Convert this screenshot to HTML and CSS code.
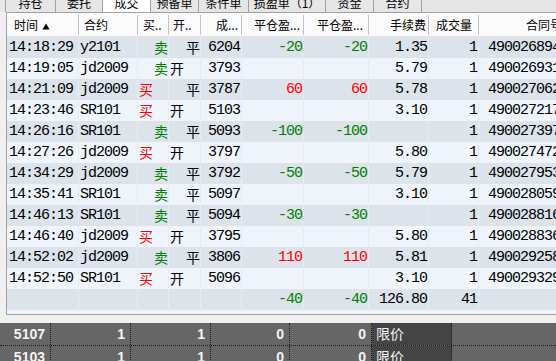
FILE: index.html
```html
<!DOCTYPE html>
<html>
<head>
<meta charset="utf-8">
<link rel="stylesheet" href="styles.css">
</head>
<body>
<div class="tabs">
  <div class="tab w1 first"><span>持仓</span></div>
  <div class="tab w2"><span>委托</span></div>
  <div class="tab w3 on"><span>成交</span></div>
  <div class="tab w4"><span>预备单</span></div>
  <div class="tab w5"><span>条件单</span></div>
  <div class="tab w6"><span>损盈单（1）</span></div>
  <div class="tab w7"><span>资金</span></div>
  <div class="tab w8"><span>合约</span></div>
</div>
<div class="panel">
  <div class="row hd">
    <div class="c h-tm">时间 <svg class="sort" width="8" height="7" viewBox="0 0 8 7"><path d="M4 0.5 L7.6 6.5 L0.4 6.5 Z" fill="#000"/></svg></div>
    <div class="c h-l5">合约</div>
    <div class="c h-l5">买..</div>
    <div class="c h-l4">开..</div>
    <div class="c h-r">成...</div>
    <div class="c h-r">平仓盈...</div>
    <div class="c h-r h-r5">平仓盈...</div>
    <div class="c h-r h-r2">手续费</div>
    <div class="c h-r h-r6">成交量</div>
    <div class="c h-r h-r20">合同号</div>
  </div>

  <div class="row odd">
    <div class="c tm">14:18:29</div><div class="c ct">y2101</div>
    <div class="c cj r g">卖</div><div class="c cj r">平</div>
    <div class="c n">6204</div><div class="c n g">-20</div><div class="c n g">-20</div>
    <div class="c n">1.35</div><div class="c n">1</div><div class="c no">490026894</div>
  </div>
  <div class="row even">
    <div class="c tm">14:19:05</div><div class="c ct">jd2009</div>
    <div class="c cj r g">卖</div><div class="c cj l">开</div>
    <div class="c n">3793</div><div class="c n"></div><div class="c n"></div>
    <div class="c n">5.79</div><div class="c n">1</div><div class="c no">490026931</div>
  </div>
  <div class="row odd">
    <div class="c tm">14:21:09</div><div class="c ct">jd2009</div>
    <div class="c cj l rd">买</div><div class="c cj r">平</div>
    <div class="c n">3787</div><div class="c n rd">60</div><div class="c n rd">60</div>
    <div class="c n">5.78</div><div class="c n">1</div><div class="c no">490027062</div>
  </div>
  <div class="row even">
    <div class="c tm">14:23:46</div><div class="c ct">SR101</div>
    <div class="c cj l rd">买</div><div class="c cj l">开</div>
    <div class="c n">5103</div><div class="c n"></div><div class="c n"></div>
    <div class="c n">3.10</div><div class="c n">1</div><div class="c no">490027217</div>
  </div>
  <div class="row odd">
    <div class="c tm">14:26:16</div><div class="c ct">SR101</div>
    <div class="c cj r g">卖</div><div class="c cj r">平</div>
    <div class="c n">5093</div><div class="c n g">-100</div><div class="c n g">-100</div>
    <div class="c n"></div><div class="c n">1</div><div class="c no">490027397</div>
  </div>
  <div class="row even">
    <div class="c tm">14:27:26</div><div class="c ct">jd2009</div>
    <div class="c cj l rd">买</div><div class="c cj l">开</div>
    <div class="c n">3797</div><div class="c n"></div><div class="c n"></div>
    <div class="c n">5.80</div><div class="c n">1</div><div class="c no">490027472</div>
  </div>
  <div class="row odd">
    <div class="c tm">14:34:29</div><div class="c ct">jd2009</div>
    <div class="c cj r g">卖</div><div class="c cj r">平</div>
    <div class="c n">3792</div><div class="c n g">-50</div><div class="c n g">-50</div>
    <div class="c n">5.79</div><div class="c n">1</div><div class="c no">490027953</div>
  </div>
  <div class="row even">
    <div class="c tm">14:35:41</div><div class="c ct">SR101</div>
    <div class="c cj r g">卖</div><div class="c cj r">平</div>
    <div class="c n">5097</div><div class="c n"></div><div class="c n"></div>
    <div class="c n">3.10</div><div class="c n">1</div><div class="c no">490028059</div>
  </div>
  <div class="row odd">
    <div class="c tm">14:46:13</div><div class="c ct">SR101</div>
    <div class="c cj r g">卖</div><div class="c cj r">平</div>
    <div class="c n">5094</div><div class="c n g">-30</div><div class="c n g">-30</div>
    <div class="c n"></div><div class="c n">1</div><div class="c no">490028816</div>
  </div>
  <div class="row even">
    <div class="c tm">14:46:40</div><div class="c ct">jd2009</div>
    <div class="c cj l rd">买</div><div class="c cj l">开</div>
    <div class="c n">3795</div><div class="c n"></div><div class="c n"></div>
    <div class="c n">5.80</div><div class="c n">1</div><div class="c no">490028836</div>
  </div>
  <div class="row odd">
    <div class="c tm">14:52:02</div><div class="c ct">jd2009</div>
    <div class="c cj r g">卖</div><div class="c cj r">平</div>
    <div class="c n">3806</div><div class="c n rd">110</div><div class="c n rd">110</div>
    <div class="c n">5.81</div><div class="c n">1</div><div class="c no">490029258</div>
  </div>
  <div class="row even">
    <div class="c tm">14:52:50</div><div class="c ct">SR101</div>
    <div class="c cj l rd">买</div><div class="c cj l">开</div>
    <div class="c n">5096</div><div class="c n"></div><div class="c n"></div>
    <div class="c n">3.10</div><div class="c n">1</div><div class="c no">490029329</div>
  </div>
  <div class="row odd">
    <div class="c tm"></div><div class="c ct"></div>
    <div class="c cj"></div><div class="c cj"></div>
    <div class="c n"></div><div class="c n g">-40</div><div class="c n g">-40</div>
    <div class="c n">126.80</div><div class="c n">41</div><div class="c no"></div>
  </div>
  <div class="row even">
    <div class="c"></div><div class="c"></div><div class="c"></div><div class="c"></div><div class="c"></div>
    <div class="c"></div><div class="c"></div><div class="c"></div><div class="c"></div><div class="c"></div>
  </div>
</div>
<div class="band"></div>
<div class="dark">
  <div class="drow">
    <div class="d">5107</div><div class="d">1</div><div class="d">1</div><div class="d">0</div><div class="d">0</div><div class="d tx">限价</div><div class="d last"></div>
  </div>
  <div class="drow">
    <div class="d">5103</div><div class="d">1</div><div class="d">1</div><div class="d">0</div><div class="d">0</div><div class="d tx">限价</div><div class="d last"></div>
  </div>
</div>
</body>
</html>
```

FILE: styles.css
```css
* {
  box-sizing: border-box;
  margin: 0;
  padding: 0;
}

html, body {
  width: 556px;
  height: 361px;
  overflow: hidden;
  background: #f0f0f0;
}

body {
  font-family: "Liberation Mono", "Noto Sans CJK SC", monospace;
  color: #000;
}

/* ---------- tab strip ---------- */
.tabs {
  display: flex;
  height: 12px;
  overflow: hidden;
  background: #e6e6e6;
  padding-left: 5px;
  font: 12px/12px "Noto Sans CJK SC", sans-serif;
}

.tab {
  height: 12px;
  border-right: 1px solid #a0a0a0;
  display: flex;
  justify-content: center;
}

.tab.first { border-left: 1px solid #a0a0a0; }

.tab span {
  display: block;
  line-height: 12px;
  margin-top: -3px;
  white-space: nowrap;
}

.tab.on { background: #fff; }

.w1 { width: 51px; }
.w2 { width: 47px; }
.w3 { width: 48px; }
.w4 { width: 48px; }
.w5 { width: 50px; }
.w6 { width: 77px; }
.w7 { width: 48px; }
.w8 { width: 48px; }

/* ---------- grid panel ---------- */
.panel {
  margin-left: 6px;
  height: 303px;
  border: 1px solid #a0a0a0;
  border-right: 0;
  overflow: hidden;
  background: #eff5fb;
}

.row {
  display: grid;
  grid-template-columns: 72px 59px 31px 32px 41px 62px 65px 60px 50px 200px;
  height: 21px;
}

.row.odd { background: #dde3ea; }
.row.even { background: #eff5fb; }

.c {
  height: 21px;
  line-height: 21px;
  border-right: 1px solid #e8ecf0;
  overflow: hidden;
  white-space: nowrap;
  font-size: 15px;
  letter-spacing: -1px;
}

/* header */
.row.hd {
  height: 24px;
  background: #fbfbfb;
  border-bottom: 1px solid #e2e2e2;
  align-items: center;
}

.hd .c {
  height: 20px;
  line-height: 20px;
  font: 12px/20px "Noto Sans CJK SC", sans-serif;
  letter-spacing: 0;
  border-right: 1px solid #c2c2c2;
}

.h-tm { padding-left: 7px; }
.h-l5 { padding-left: 5px; }
.h-l4 { padding-left: 4px; }
.h-r { text-align: right; padding-right: 3px; }
.h-r5 { padding-right: 5px; }
.h-r2 { padding-right: 2px; }
.h-r6 { padding-right: 6px; }
.h-r20 { padding-right: 0; text-align: left; padding-left: 47px; }

.sort {
  vertical-align: 0px;
  margin-left: 1px;
}

/* body cells */
.tm { padding-left: 2px; }
.ct { padding-left: 1px; }

.cj {
  font: 14px/21px "Noto Sans CJK SC", sans-serif;
  letter-spacing: 0;
}
.cj.l { text-align: left; padding-left: 1px; }
.cj.r { text-align: right; padding-right: 0; }

.n { text-align: right; padding-right: 1px; }
.no { padding-left: 9px; }

.g { color: #008000; }
.rd { color: #ff0000; }

/* ---------- lower area ---------- */
.band {
  height: 8px;
  background: #f0f0f0;
}

.dark {
  background: #666;
  height: 38px;
  overflow: hidden;
}

.drow {
  display: grid;
  grid-template-columns: 51px 80px 80px 79px 82px 80px 1fr;
  height: 23px;
  border-bottom: 1px dotted #1a1a1a;
}

.d {
  border-right: 1px dotted #1a1a1a;
  color: #f4f4f4;
  font: bold 14px/22px "Liberation Sans", "Noto Sans CJK SC", sans-serif;
  text-align: right;
  padding-right: 5px;
  white-space: nowrap;
}

.d.tx {
  background: #444;
  text-align: left;
  padding-left: 4px;
  font-weight: normal;
}

.d.last { border-right: 0; }
```
